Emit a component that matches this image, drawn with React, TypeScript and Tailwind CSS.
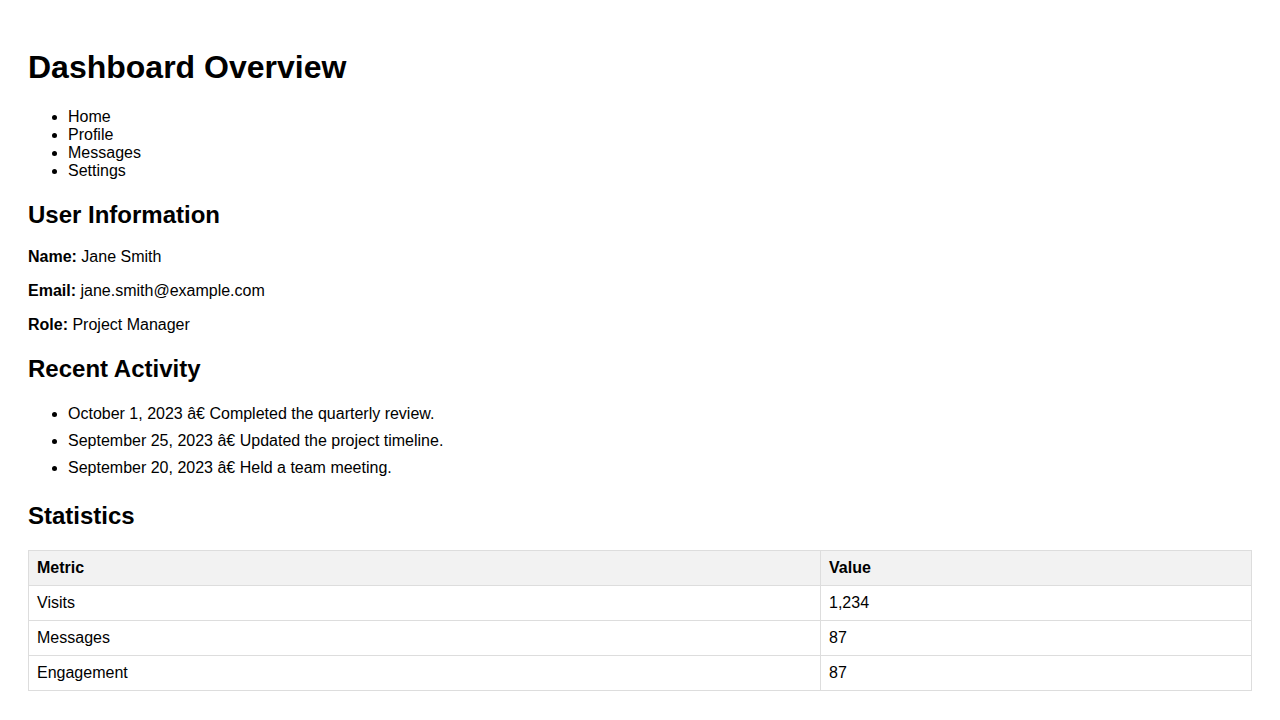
const navItems = ["Home", "Profile", "Messages", "Settings"];

const activity = [
  "October 1, 2023 â€ Completed the quarterly review.",
  "September 25, 2023 â€ Updated the project timeline.",
  "September 20, 2023 â€ Held a team meeting.",
];

const stats = [
  { metric: "Visits", value: "1,234" },
  { metric: "Messages", value: "87" },
  { metric: "Engagement", value: "87" },
];

export default function App() {
  return (
    <div className="min-h-screen bg-white px-[28px] pt-[49px] pb-[30px] font-['Liberation_Sans',Arial,sans-serif] text-[16px] leading-[18px] text-black">
      <h1 className="text-[32px] font-bold leading-[37px]">Dashboard Overview</h1>

      <ul className="mt-[22px] list-disc pl-[40px]">
        {navItems.map((item) => (
          <li key={item}>{item}</li>
        ))}
      </ul>

      <h2 className="mt-[21px] text-[24px] font-bold leading-[28px]">User Information</h2>
      <p className="mt-[19px]">
        <strong className="font-bold">Name:</strong> Jane Smith
      </p>
      <p className="mt-[16px]">
        <strong className="font-bold">Email:</strong> jane.smith@example.com
      </p>
      <p className="mt-[16px]">
        <strong className="font-bold">Role:</strong> Project Manager
      </p>

      <h2 className="mt-[21px] text-[24px] font-bold leading-[28px]">Recent Activity</h2>
      <ul className="mt-[17px] list-disc pl-[40px]">
        {activity.map((item) => (
          <li key={item} className="py-[4.5px]">
            {item}
          </li>
        ))}
      </ul>

      <h2 className="mt-[21px] text-[24px] font-bold leading-[28px]">Statistics</h2>
      <table className="mt-[20px] w-full border-collapse leading-[18px]">
        <thead>
          <tr className="bg-[#f2f2f2]">
            <th className="w-[792px] border border-[#dddddd] p-[8px] text-left font-bold">Metric</th>
            <th className="border border-[#dddddd] p-[8px] text-left font-bold">Value</th>
          </tr>
        </thead>
        <tbody>
          {stats.map((row) => (
            <tr key={row.metric}>
              <td className="border border-[#dddddd] p-[8px]">{row.metric}</td>
              <td className="border border-[#dddddd] p-[8px]">{row.value}</td>
            </tr>
          ))}
        </tbody>
      </table>
    </div>
  );
}
